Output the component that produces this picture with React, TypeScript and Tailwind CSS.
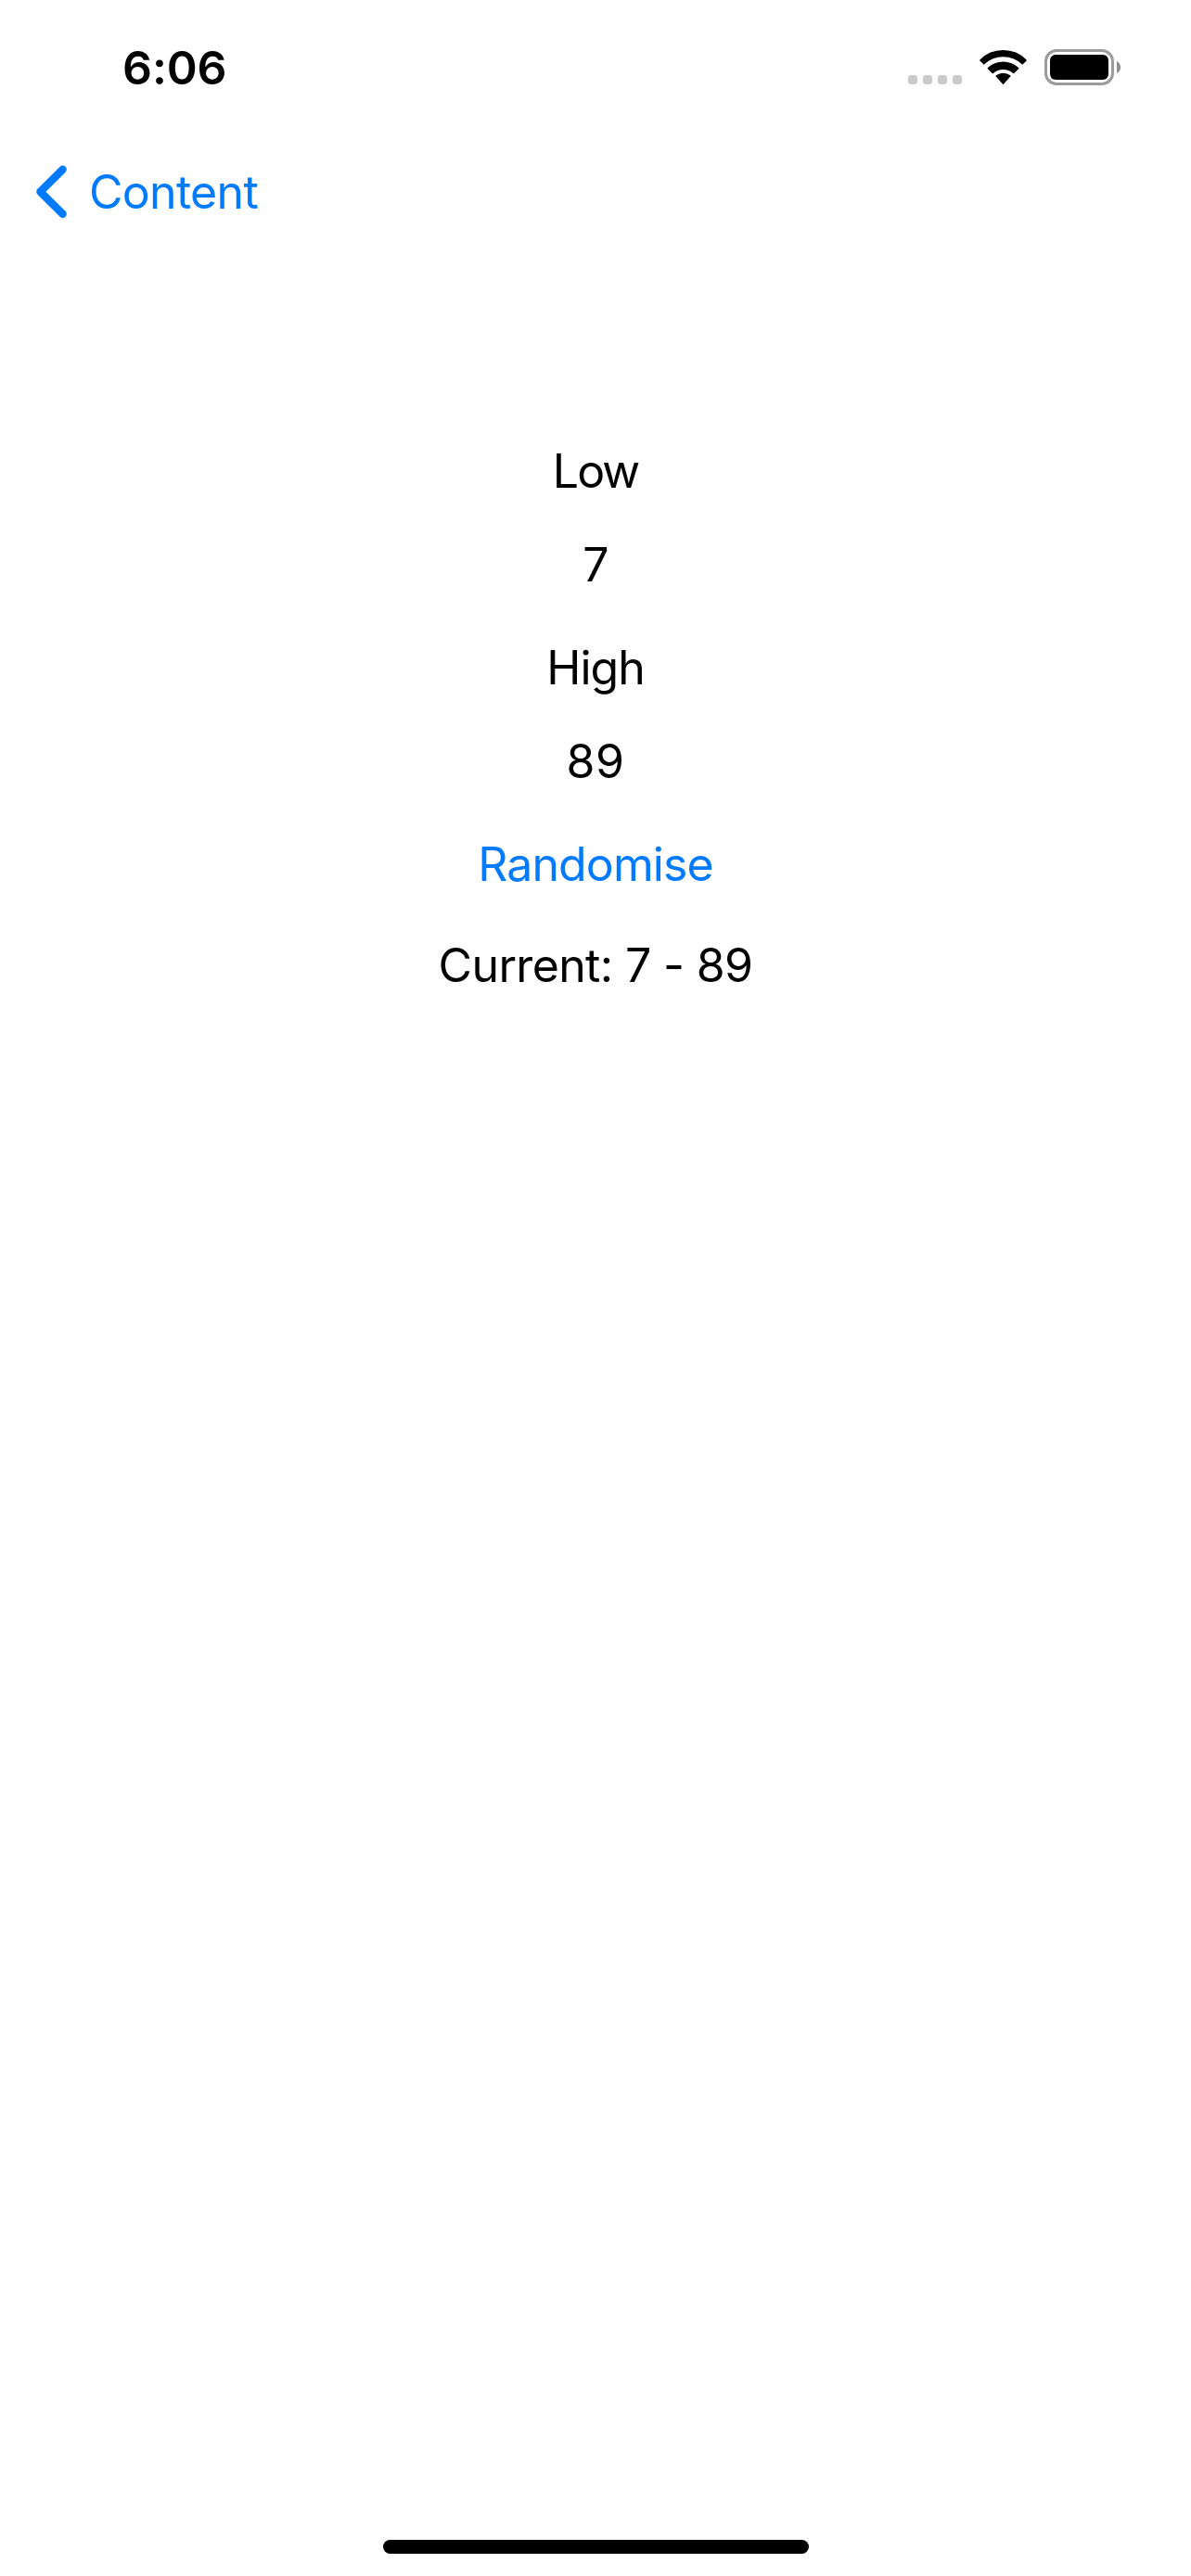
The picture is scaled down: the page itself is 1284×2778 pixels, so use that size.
function StatusBar() {
  return (
    <header className="flex h-[132px] items-start justify-between pl-[132px] pr-[76px]">
      <div className="mt-[43px] text-[50px] leading-[60px] font-semibold tracking-[-0.1px]">6:06</div>
      <div className="mt-[53px] flex h-[39px] items-start">
        <div className="mt-[28px] flex gap-[6px]">
          {[0, 1, 2, 3].map((i) => (
            <span key={i} className="size-[10px] rounded-[3px] bg-[#cbcbcb]" />
          ))}
        </div>
        <svg className="mt-px ml-[19px] h-[37px] w-[51px]" viewBox="0 0 150 111" preserveAspectRatio="none" strokeWidth="5" strokeLinejoin="round" fill="black" stroke="black">
          <path d="M3 32A101 101 0 0 1 147 32L136 43A87 87 0 0 0 14 43Z" transform="translate(0 1)" />
          <path d="M28 58A68 68 0 0 1 122 58L108 72A50 50 0 0 0 42 72Z" transform="translate(0 1)" />
          <path d="M54 84A35 35 0 0 1 96 84L75 108Z" />
        </svg>
        <div className="ml-[19px] h-[39px] w-[75px] rounded-[13px] border-[3px] border-[#9b9b9b] p-[3px]">
          <div className="h-full w-full rounded-[6px] bg-black" />
        </div>
        <svg className="mt-[13px] ml-[3px] h-[13px] w-[4px]" viewBox="0 0 4 13" fill="#8f8f8f">
          <path d="M0 0Q4 2 4 6.5T0 13Z" />
        </svg>
      </div>
    </header>
  );
}

export default function App() {
  return (
    <div
      className="flex h-[2778px] w-[1284px] flex-col bg-white text-[50px] leading-[60px] tracking-[-0.7px] text-black"
      style={{ fontFamily: "Inter, sans-serif" }}
    >
      <StatusBar />
      <nav className="flex h-[132px] items-start pl-[38px] text-[#007aff]">
        <svg className="mt-[45px] h-[59px] w-[36px]" viewBox="0 0 36 59" fill="none" stroke="currentColor" strokeWidth="8.4" strokeLinecap="round" strokeLinejoin="round">
          <path d="M29.6 5.8L5.4 29.7L29.6 53.7" />
        </svg>
        <button className="mt-[45px] ml-[22px]">Content</button>
      </nav>
      <main className="flex flex-1 flex-col items-center pt-[214px]">
        <div className="tracking-[-2px]">Low</div>
        <div className="mt-[41px]">7</div>
        <div className="mt-[51px] tracking-[-1px]">High</div>
        <div className="mt-[41px] tracking-[0.5px]">89</div>
        <button className="mt-[51px] tracking-[-0.9px] text-[#007aff]">Randomise</button>
        <div className="mt-[49px] tracking-[-0.65px]">Current: 7 - 89</div>
      </main>
      <footer className="flex h-[39px] justify-center">
        <div className="h-[15px] w-[459px] rounded-full bg-black" />
      </footer>
    </div>
  );
}
